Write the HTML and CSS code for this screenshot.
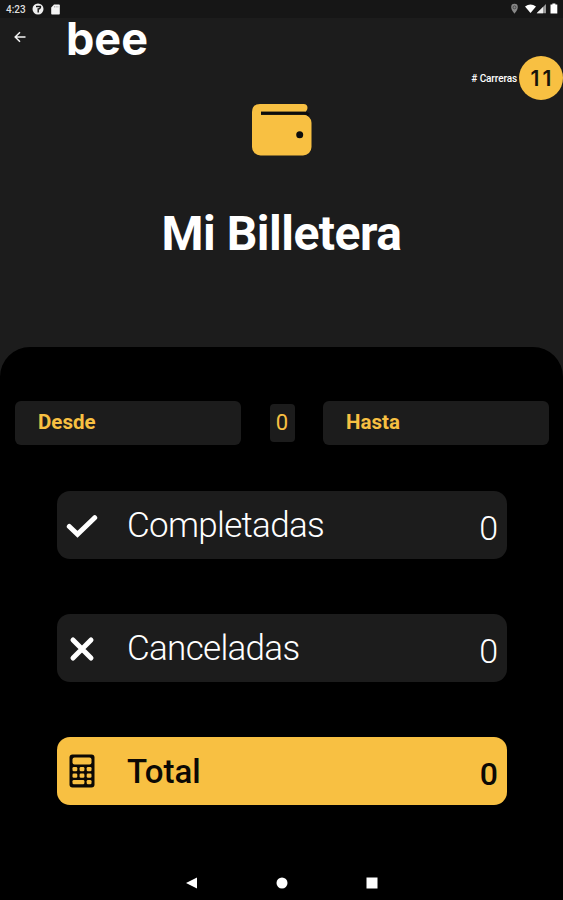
FILE: index.html
```html
<!DOCTYPE html>
<html lang="es">
<head>
  <meta charset="UTF-8" />
  <meta name="viewport" content="width=device-width, initial-scale=1.0"/>
  <title>Mi Billetera | bee</title>
  <link rel="stylesheet" href="styles.css">
</head>
<body>

  <!-- Status bar -->
  <div class="status-bar">
    <span class="clock">4:23</span>
    <svg class="status-app" width="12" height="12" viewBox="0 0 12 12">
      <circle cx="6" cy="6" r="5.5" fill="#eee"/>
      <path d="M4 3.500h4.500a2.200 2.200 0 0 1-2.300 2.500V9.500" fill="none" stroke="#161616" stroke-width="1.400"/>
    </svg>
    <svg class="status-card" width="9" height="11" viewBox="0 0 9 11">
      <path d="M3 .5h5a.8.8 0 0 1 .8.8v8.400a.8.8 0 0 1-.8.8H1a.8.8 0 0 1-.8-.8V3.500z" fill="#f5f5f5"/>
      <path d="M3.500 2v1.500M5.200 2v1.500M6.900 2v1.500" stroke="#999" stroke-width=".7"/>
    </svg>
    <svg class="status-right" width="48" height="12" viewBox="0 0 48 12">
      <path d="M4.500 .8a3.300 3.300 0 0 1 3.300 3.400C7.800 7 4.500 10.500 4.500 10.500S1.200 7 1.200 4.200A3.300 3.300 0 0 1 4.500 .8z" fill="#888"/>
      <circle cx="4.500" cy="4.300" r="1.500" fill="none" stroke="#333" stroke-width=".7"/>
      <path d="M15 3.500Q20.500-.7 26 3.500L20.500 10z" fill="#fff"/>
      <path d="M36 1v9.300h-9.300z" fill="#999"/>
      <path d="M33 4v6.300h-6.300z" fill="#eee"/>
      <path d="M40.500 1.500h1.900V.6h3v.9h1.900v9h-6.800z" fill="#fff"/>
    </svg>
  </div>

  <header>
    <div class="toolbar">
      <svg class="back" width="12" height="12" viewBox="0 0 12 12">
        <path d="M11.500 6H1.500M6 1.200 1.200 6 6 10.800" fill="none" stroke="#f2f2f2" stroke-width="1.500"/>
      </svg>
      <span class="logo">bee</span>
    </div>

    <div class="rides">
      <span class="rides-label"># Carreras</span>
      <span class="rides-count">11</span>
    </div>

    <svg class="wallet" width="60" height="52" viewBox="0 0 60 52">
      <path d="M8 0H51.500a4 4 0 0 1 4 4q0 2-2 3.800H9V10.800H51.500a8 8 0 0 1 8 8V43a8.500 8.500 0 0 1-8.500 8.500H8.500A8.500 8.500 0 0 1 0 43V8Q0 0 8 0z" fill="#f8c042"/>
      <path d="M9 9.200H52.500q2.500 0 4.500 1.500" fill="none" stroke="#0c0c0c" stroke-width="3"/>
      <circle cx="47.700" cy="30.800" r="3.500" fill="#0c0c0c"/>
    </svg>

    <h1>Mi Billetera</h1>
  </header>

  <main>
    <div class="filters">
      <div class="date">Desde</div>
      <div class="days">0</div>
      <div class="date">Hasta</div>
    </div>

    <div class="totals">
      <div class="row">
        <svg class="icon" width="32" height="32" viewBox="0 0 32 32">
          <path d="M3.300 17.500 11.500 25.300 28.700 8.700" fill="none" stroke="#fff" stroke-width="5" stroke-linecap="round"/>
        </svg>
        <span class="name">Completadas</span>
        <span class="value">0</span>
      </div>
      <div class="row">
        <svg class="icon" width="32" height="32" viewBox="0 0 32 32">
          <path d="M7 8 25 26M25 8 7 26" fill="none" stroke="#fff" stroke-width="5" stroke-linecap="round"/>
        </svg>
        <span class="name">Canceladas</span>
        <span class="value">0</span>
      </div>
      <div class="row total">
        <svg class="icon" width="32" height="36" viewBox="0 0 32 36">
          <rect x="3.500" y="1.500" width="25" height="33" rx="3" fill="#0c0905"/>
          <rect x="6.500" y="4.500" width="19" height="7" rx="2" fill="#f8c042"/>
          <g fill="#f8c042">
            <rect x="6.500" y="14" width="4.800" height="4.300" rx="1.300"/>
            <rect x="13.600" y="14" width="4.800" height="4.300" rx="1.300"/>
            <rect x="20.700" y="14" width="4.800" height="4.300" rx="1.300"/>
            <rect x="6.500" y="20.500" width="4.800" height="4.300" rx="1.300"/>
            <rect x="13.600" y="20.500" width="4.800" height="4.300" rx="1.300"/>
            <rect x="20.700" y="20.500" width="4.800" height="4.300" rx="1.300"/>
            <rect x="6.500" y="27" width="11.900" height="4.300" rx="1.300"/>
            <rect x="20.700" y="27" width="4.800" height="4.300" rx="1.300"/>
          </g>
        </svg>
        <span class="name">Total</span>
        <span class="value">0</span>
      </div>
    </div>
  </main>

  <!-- Navigation bar -->
  <nav>
    <svg width="12" height="12" viewBox="0 0 12 12"><path d="M0 6 11 .5v11z" fill="#fff"/></svg>
    <svg width="12" height="12" viewBox="0 0 12 12"><circle cx="6" cy="6" r="5.500" fill="#fff"/></svg>
    <svg width="12" height="12" viewBox="0 0 12 12"><rect x=".5" y=".5" width="11" height="11" fill="#fff"/></svg>
  </nav>

</body>
</html>
```

FILE: styles.css
```css
* {
  box-sizing: border-box;
}

body {
  margin: 0;
  height: 900px;
  display: flex;
  flex-direction: column;
  overflow: hidden;
  background: #1c1c1c;
  color: #fff;
  font-family: Roboto, sans-serif;
}

svg {
  display: block;
  flex: none;
}

.status-bar {
  display: flex;
  align-items: center;
  height: 18px;
  padding: 0 5px 0 6px;
  background: #161616;
}

.clock {
  width: 26px;
  font-size: 10px;
  font-weight: 500;
  color: #ddd;
}

.status-card {
  margin-left: 7px;
}

.status-right {
  margin-left: auto;
}

header {
  display: flex;
  flex-direction: column;
  align-items: center;
  height: 329px;
}

.toolbar {
  display: flex;
  align-items: center;
  width: 100%;
  height: 38px;
  padding-left: 14px;
}

.logo {
  margin-left: 40px;
  padding-top: 3px;
  font-family: Inter, sans-serif;
  font-size: 45px;
  font-weight: 700;
  line-height: 35px;
}

.rides {
  display: flex;
  align-items: center;
  align-self: flex-end;
  gap: 2px;
  height: 44px;
}

.rides-label {
  font-size: 10px;
  font-weight: 500;
  letter-spacing: -0.1px;
}

.rides-count {
  width: 44px;
  height: 44px;
  padding-left: 3px;
  border-radius: 50%;
  background: #f8c042;
  color: #17130a;
  font-family: Inter, sans-serif;
  font-size: 21px;
  font-weight: 600;
  letter-spacing: 3px;
  line-height: 46px;
  text-align: center;
}

.wallet {
  margin-top: 4px;
}

h1 {
  margin: 50px 0 0;
  font-size: 48px;
  font-weight: 700;
  letter-spacing: -0.5px;
  line-height: 56px;
}

main {
  flex: 1;
  padding: 54px 14px 0 15px;
  border-radius: 30px 30px 0 0;
  background: #000;
}

.filters {
  display: flex;
  align-items: center;
  justify-content: space-between;
  color: #f8c042;
}

.date {
  width: 226px;
  height: 44px;
  padding-left: 23px;
  border-radius: 6px;
  background: #1c1c1c;
  font-size: 20.5px;
  font-weight: 700;
  line-height: 43px;
}

.days {
  width: 25px;
  height: 38px;
  border-radius: 4px;
  background: #1c1c1c;
  font-size: 22px;
  line-height: 38px;
  text-align: center;
}

.totals {
  display: flex;
  flex-direction: column;
  gap: 55px;
  width: 450px;
  margin: 46px 0 0 42px;
}

.row {
  display: flex;
  align-items: center;
  height: 68px;
  padding: 0 9px;
  border-radius: 13px;
  background: #1c1c1c;
  font-size: 35px;
  font-weight: 300;
}

.name {
  margin-left: 29px;
  padding-top: 1px;
  letter-spacing: -0.7px;
}

.value {
  margin-left: auto;
  padding-top: 5px;
  font-size: 34px;
}

.total {
  background: #f8c042;
  color: #0c0905;
  font-size: 33px;
  font-weight: 500;
}

.total .name {
  padding-top: 0;
  letter-spacing: 0;
}

.total .value {
  font-size: 32px;
}

nav {
  display: flex;
  justify-content: center;
  gap: 78px;
  height: 23px;
  background: #000;
}
```
